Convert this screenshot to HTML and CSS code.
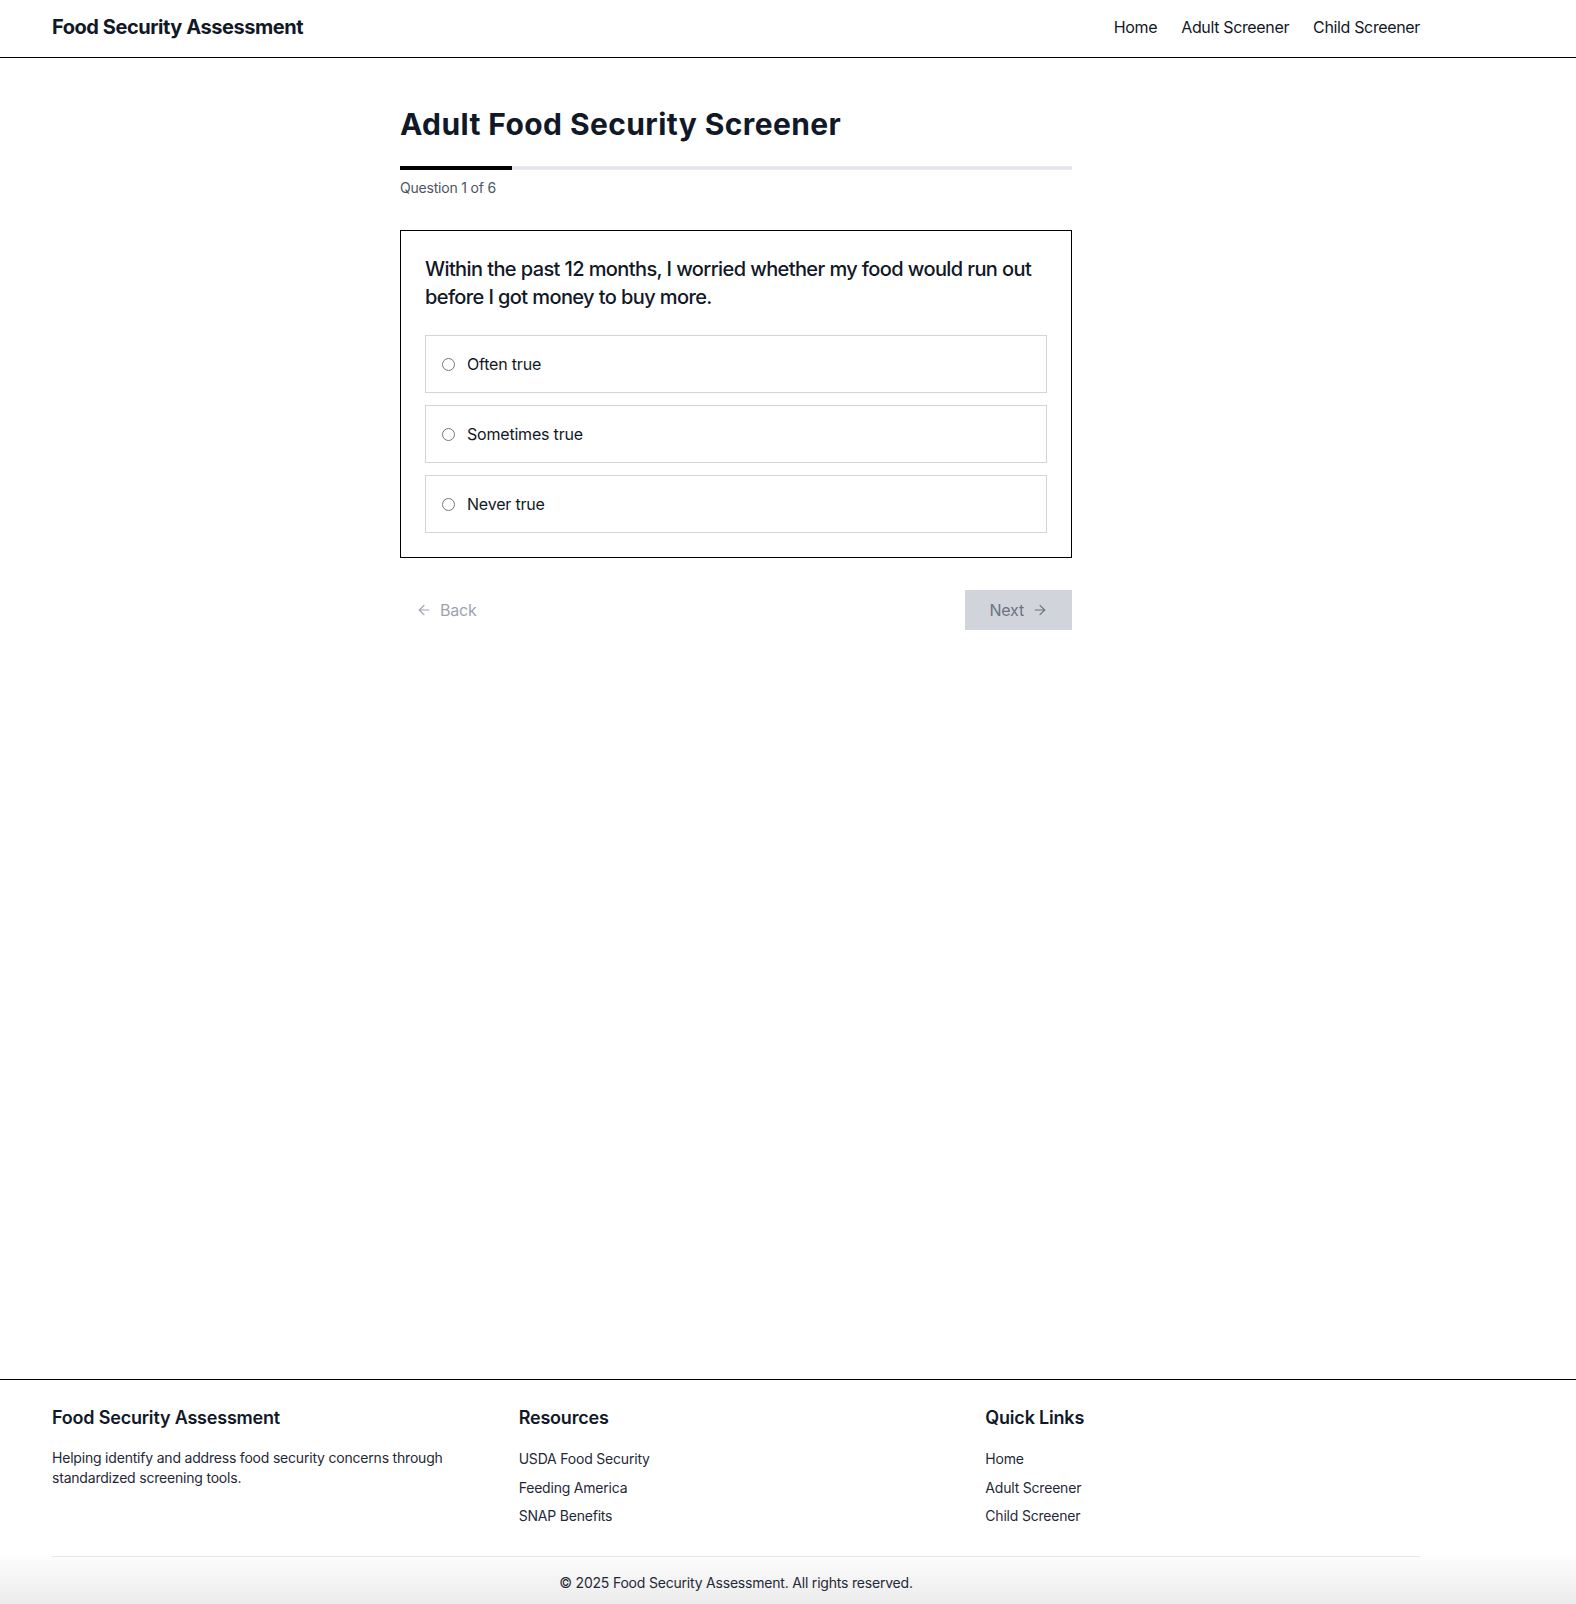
FILE: index.html
```html
<!DOCTYPE html>
<html lang="en">
<head>
<meta charset="utf-8">
<title>Adult Food Security Screener</title>
<link rel="stylesheet" href="styles.css">
</head>
<body>
<div class="page">
  <header class="site-header">
    <div class="container header-inner">
      <a class="logo" href="#">Food Security Assessment</a>
      <nav class="nav">
        <a href="#">Home</a>
        <a href="#">Adult Screener</a>
        <a href="#">Child Screener</a>
      </nav>
    </div>
  </header>

  <main class="main">
    <div class="screener">
      <h1 class="title">Adult Food Security Screener</h1>
      <div class="progress"><div class="progress-fill" style="width: 16.6667%"></div></div>
      <p class="progress-label">Question 1 of 6</p>

      <section class="card">
        <h2 class="question">Within the past 12 months, I worried whether my food would run out before I got money to buy more.</h2>
        <div class="options">
          <label class="option"><input type="radio" name="q1"><span>Often true</span></label>
          <label class="option"><input type="radio" name="q1"><span>Sometimes true</span></label>
          <label class="option"><input type="radio" name="q1"><span>Never true</span></label>
        </div>
      </section>

      <div class="actions">
        <button class="btn-back" type="button" disabled>
          <svg width="16" height="16" viewBox="0 0 24 24" fill="none" stroke="currentColor" stroke-width="1.8" stroke-linecap="round" stroke-linejoin="round"><path d="m12 19-7-7 7-7"/><path d="M19 12H5"/></svg>
          <span>Back</span>
        </button>
        <button class="btn-next" type="button" disabled>
          <span>Next</span>
          <svg width="16" height="16" viewBox="0 0 24 24" fill="none" stroke="currentColor" stroke-width="1.8" stroke-linecap="round" stroke-linejoin="round"><path d="M5 12h14"/><path d="m12 5 7 7-7 7"/></svg>
        </button>
      </div>
    </div>
  </main>

  <footer class="site-footer">
    <div class="container footer-grid">
      <div class="footer-col">
        <h3 class="footer-heading">Food Security Assessment</h3>
        <p class="footer-text">Helping identify and address food security concerns through standardized screening tools.</p>
      </div>
      <div class="footer-col">
        <h3 class="footer-heading">Resources</h3>
        <ul class="footer-links">
          <li><a href="#">USDA Food Security</a></li>
          <li><a href="#">Feeding America</a></li>
          <li><a href="#">SNAP Benefits</a></li>
        </ul>
      </div>
      <div class="footer-col">
        <h3 class="footer-heading">Quick Links</h3>
        <ul class="footer-links">
          <li><a href="#">Home</a></li>
          <li><a href="#">Adult Screener</a></li>
          <li><a href="#">Child Screener</a></li>
        </ul>
      </div>
    </div>
    <div class="footer-bottom">
      <div class="container">
        <p class="copyright">© 2025 Food Security Assessment. All rights reserved.</p>
      </div>
    </div>
  </footer>
</div>
</body>
</html>
```

FILE: styles.css
```css
* {
  box-sizing: border-box;
}

html, body {
  margin: 0;
  padding: 0;
}

body {
  font-family: Inter, "Noto Sans", "Liberation Sans", sans-serif;
  color: #111827;
  background: #ffffff;
  letter-spacing: -0.2px;
}

a {
  color: inherit;
  text-decoration: none;
}

.page {
  min-height: 100vh;
  display: flex;
  flex-direction: column;
}

.container {
  width: 1472px;
  padding: 0 52px;
}

/* Header */
.site-header {
  border-bottom: 1px solid #000000;
}

.header-inner {
  height: 57px;
  padding-bottom: 3px;
  display: flex;
  align-items: center;
  justify-content: space-between;
}

.logo {
  font-size: 20px;
  line-height: 28px;
  font-weight: 700;
  color: #111827;
  letter-spacing: -0.45px;
}

.nav {
  display: flex;
  gap: 24px;
}

.nav a {
  font-size: 16px;
  line-height: 24px;
  color: #111827;
  letter-spacing: -0.35px;
}

/* Main */
.main {
  flex: 1;
  width: 1472px;
  padding: 48px 0;
}

.screener {
  width: 672px;
  margin: 0 auto;
}

.title {
  margin: 0 0 24px;
  font-size: 30px;
  line-height: 36px;
  font-weight: 700;
  color: #111827;
  letter-spacing: 0.4px;
}

.progress {
  height: 4px;
  background: #e5e7eb;
}

.progress-fill {
  height: 100%;
  background: #000000;
}

.progress-label {
  margin: 8px 0 32px;
  font-size: 14px;
  line-height: 20px;
  color: #4b5563;
}

.card {
  border: 1px solid #000000;
  padding: 24px;
}

.question {
  margin: 0 0 24px;
  font-size: 20px;
  line-height: 28px;
  font-weight: 500;
  color: #111827;
  letter-spacing: -0.6px;
}

.options {
  display: flex;
  flex-direction: column;
  gap: 12px;
}

.option {
  display: flex;
  align-items: center;
  padding: 16px;
  border: 1px solid #d1d5db;
  font-size: 16px;
  line-height: 24px;
  color: #111827;
  cursor: pointer;
}

.option input {
  margin: 0 12px 0 0;
  width: 13px;
  height: 13px;
}

.actions {
  margin-top: 32px;
  display: flex;
  justify-content: space-between;
  align-items: center;
}

.btn-back,
.btn-next {
  display: flex;
  align-items: center;
  gap: 8px;
  height: 40px;
  border: none;
  font-family: inherit;
  font-size: 16px;
  line-height: 24px;
  letter-spacing: -0.2px;
}

.btn-back {
  padding: 8px 16px;
  background: transparent;
  color: #9ca3af;
}

.btn-next {
  padding: 8px 24px;
  background: #d1d5db;
  color: #6b7280;
}

/* Footer */
.site-footer {
  border-top: 1px solid #000000;
}

.footer-grid {
  display: grid;
  grid-template-columns: repeat(3, 1fr);
  gap: 32px;
  padding-top: 24px;
  padding-bottom: 30px;
}

.footer-heading {
  margin: 0 0 16px;
  font-size: 18px;
  line-height: 28px;
  font-weight: 600;
  color: #111827;
}

.footer-text {
  margin: 0;
  font-size: 14px;
  line-height: 20px;
  color: #1f2937;
}

.footer-links {
  list-style: none;
  margin: 0;
  padding: 0;
  display: flex;
  flex-direction: column;
  gap: 7.5px;
}

.footer-links a {
  font-size: 14px;
  line-height: 20px;
  color: #1f2937;
}

.footer-bottom {
  background: linear-gradient(to bottom, #fdfdfd, #ebebeb);
}

.copyright {
  margin: 0;
  border-top: 1px solid #e5e7eb;
  padding: 16px 0 11px;
  text-align: center;
  font-size: 14px;
  line-height: 20px;
  color: #1f2937;
}
```
